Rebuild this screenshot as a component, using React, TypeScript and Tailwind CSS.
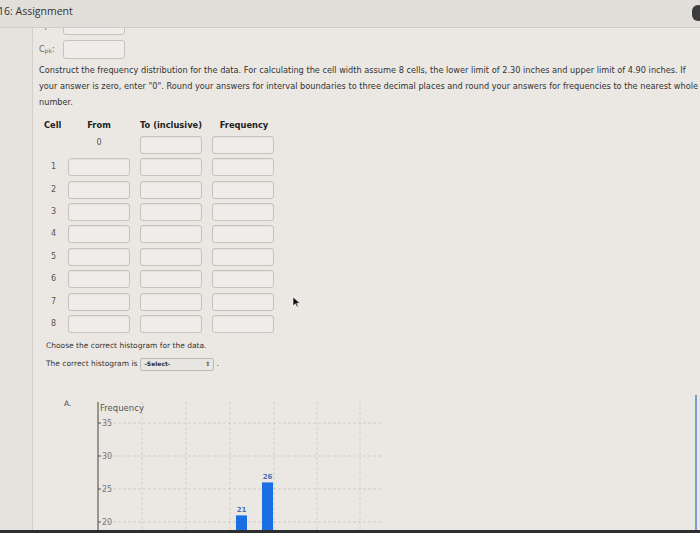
import React from "react";

const rows = [1, 2, 3, 4, 5, 6, 7, 8];

function Box({ className = "" }: { className?: string }) {
  return (
    <div
      className={
        "h-[18px] w-[62px] shrink-0 rounded-[3px] border border-[#c6c3be] bg-[#efede9] shadow-[inset_0_1px_1px_rgba(0,0,0,0.05)] " +
        className
      }
    />
  );
}

function Chart() {
  const left = 4;
  const y = (v: number) => 26 + (35 - v) * 6.6;
  const xs = [48, 92, 136, 180, 223, 266];
  return (
    <svg width="300" height="140" viewBox="0 0 300 140" className="block">
      {[35, 30, 25, 20].map((v) => (
        <g key={v}>
          <line x1={left} x2={288} y1={y(v)} y2={y(v)} stroke="#c4c1bc" strokeWidth="0.7" strokeDasharray="3 2" />
          <line x1={left} x2={left + 3} y1={y(v)} y2={y(v)} stroke="#444" strokeWidth="0.8" />
          <text x={left + 4} y={y(v) + 3} fontSize="8" fill="#777" fontFamily="DejaVu Sans, sans-serif">
            {v}
          </text>
        </g>
      ))}
      {xs.map((x) => (
        <line key={x} x1={x} x2={x} y1={5} y2={140} stroke="#c8c5c0" strokeWidth="0.7" strokeDasharray="3 2" />
      ))}
      <line x1={left} x2={left} y1={5} y2={140} stroke="#444" strokeWidth="1" />
      <text x={left + 2} y={14} fontSize="8.5" fill="#555" fontFamily="DejaVu Sans, sans-serif">
        Frequency
      </text>
      <rect x={142} y={y(21)} width={11} height={140 - y(21)} fill="#1a6fe3" />
      <rect x={168} y={y(26)} width={11} height={140 - y(26)} fill="#1a6fe3" />
      <text x={147.5} y={y(21) - 3} fontSize="7" fontWeight="bold" fill="#4a70b8" textAnchor="middle" fontFamily="DejaVu Sans, sans-serif">
        21
      </text>
      <text x={173.5} y={y(26) - 3} fontSize="7" fontWeight="bold" fill="#4a70b8" textAnchor="middle" fontFamily="DejaVu Sans, sans-serif">
        26
      </text>
    </svg>
  );
}

export default function App() {
  return (
    <div className="relative h-[533px] w-[700px] overflow-hidden bg-[#ebe8e3] font-['DejaVu_Sans',sans-serif] text-[#333]">
      {/* header */}
      <div className="flex h-[28px] items-center border-b border-[#cfccc7] bg-[#e2dfdb] pb-[3px]">
        <span className="-ml-[2px] font-['Open_Sans',sans-serif] text-[10.5px] text-[#333]">16: Assignment</span>
      </div>

      <div className="flex h-[505px]">
        <div className="w-[33px] shrink-0 border-r border-[#d3d0cb] bg-[#e6e3df]" />

        <div className="flex-1 overflow-hidden pl-[6px]">
          {/* Cpu / Cpk */}
          <div className="-mt-[12px] flex items-center gap-[8px]">
            <span className="w-[16px] text-[8px] leading-[10px] text-[#666]">Cpu:</span>
            <div className="h-[19px] w-[62px] rounded-[3px] border border-[#c6c3be] bg-[#efede9]" />
          </div>
          <div className="mt-[5px] flex items-center gap-[8px]">
            <span className="w-[16px] text-[8px] text-[#666]">
              C<sub className="text-[6px]">pk</sub>:
            </span>
            <div className="h-[19px] w-[62px] rounded-[3px] border border-[#c6c3be] bg-[#efede9]" />
          </div>

          <p className="mt-[3px] whitespace-nowrap text-[8.2px] leading-[16px] text-[#333]">
            Construct the frequency distribution for the data. For calculating the cell width assume 8 cells, the lower limit of 2.30 inches and upper limit of 4.90 inches. If
            <br />
            your answer is zero, enter "0". Round your answers for interval boundaries to three decimal places and round your answers for frequencies to the nearest whole
            <br />
            number.
          </p>

          {/* table */}
          <div className="mt-[6px] pl-[1px]">
            <div className="flex h-[18px] items-center text-[8.3px] font-bold text-[#222]">
              <span className="w-[28px] pl-[4px]">Cell</span>
              <span className="mr-[10px] w-[62px] text-center">From</span>
              <span className="mr-[10px] w-[62px] text-center">To (inclusive)</span>
              <span className="w-[62px] pl-[2px] text-center">Frequency</span>
            </div>
            <div className="flex h-[22px] items-center text-[8px] text-[#555]">
              <span className="w-[28px]" />
              <span className="mr-[10px] w-[62px] -translate-y-[2px] text-center">0</span>
              <Box />
              <Box className="ml-[10px]" />
            </div>
            {rows.map((n) => (
              <div key={n} className="flex h-[22.4px] items-center text-[8px] text-[#555]">
                <span className="w-[28px] pl-[11px]">{n}</span>
                <Box />
                <Box className="ml-[10px]" />
                <Box className="ml-[10px]" />
              </div>
            ))}
          </div>

          <div className="mt-[2px] pl-[7px] text-[7.5px] text-[#333]">
            <div className="leading-[18px]">Choose the correct histogram for the data.</div>
            <div className="flex items-center leading-[18px]">
              <span>The correct histogram is</span>
              <span className="ml-[3px] flex h-[13px] w-[74px] items-center justify-between rounded-[2px] border border-[#bdbab5] bg-[#e8e6e2] px-[3px] text-[6px] font-bold text-[#333]">
                -Select-
                <span className="text-[6px] leading-none text-[#555]">⇕</span>
              </span>
              <span className="ml-[2px]">.</span>
            </div>
          </div>

          <div className="mt-[24px] flex pl-[25px]">
            <span className="w-[30px] pt-[1px] text-[7.5px] text-[#444]">A.</span>
            <Chart />
          </div>
        </div>
      </div>

      {/* overlays: cursor, header button, bezel */}
      <svg className="absolute left-[292px] top-[296px]" width="9" height="12" viewBox="0 0 9 12">
        <path d="M1 1 L1 10 L3.4 7.8 L5 11 L6.3 10.4 L4.8 7.3 L8 7.3 Z" fill="#111" stroke="#fff" strokeWidth="0.6" />
      </svg>
      <div className="absolute -right-[4px] top-[5px] h-[16px] w-[12px] rounded-full bg-[#3d3d3d]" />
      <div className="absolute left-[695px] top-[395px] h-[135px] w-[2px] bg-[#7a9ccf]" />
      <div className="absolute bottom-0 left-0 h-[3px] w-full bg-[#2e2e30]" />
    </div>
  );
}
